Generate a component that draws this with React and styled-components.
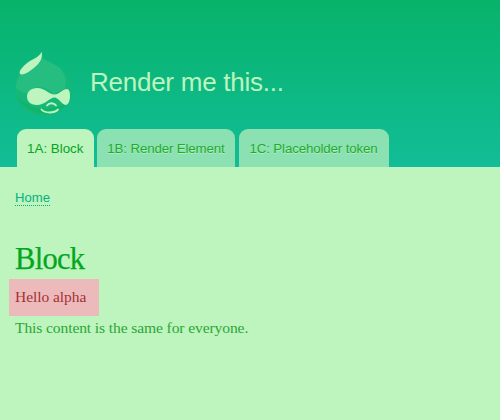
import React from "react";
import styled, { createGlobalStyle } from "styled-components";

const GlobalStyle = createGlobalStyle`
  * { box-sizing: border-box; }
  body { margin: 0; background: #bef4be; }
`;

const Page = styled.div`
  height: 420px;
  overflow: hidden;
  background: #bef4be;
  font-family: Georgia, "Liberation Serif", serif;
`;

const Header = styled.header`
  display: flex;
  flex-direction: column;
  justify-content: space-between;
  height: 167px;
  padding: 50px 0 0 13px;
  background: linear-gradient(#07b36a, #12bd97);
  font-family: "Liberation Sans", Arial, sans-serif;
`;

const Branding = styled.div`
  display: flex;
  align-items: flex-start;
`;

const Logo = styled.svg`
  width: 60px;
  height: 68px;
  flex: none;
`;

const SiteName = styled.div`
  margin: 16px 0 0 17px;
  color: #bef4be;
  font-size: 26px;
  line-height: 32px;
  letter-spacing: -0.25px;
  white-space: nowrap;
`;

const Tabs = styled.nav`
  display: flex;
  gap: 3.5px;
  padding-left: 4px;
`;

const Tab = styled.a`
  width: ${(p) => p.$width}px;
  height: 38px;
  border-radius: 9px 9px 0 0;
  background: ${(p) => (p.$active ? "#bef4be" : "#8be1b2")};
  color: ${(p) => (p.$active ? "#05a61f" : "#23ab31")};
  font-size: 13.33px;
  letter-spacing: ${(p) => (p.$active ? "0" : "-0.15px")};
  line-height: 39px;
  text-align: center;
  white-space: nowrap;
  text-shadow: 0 1px 0 ${(p) => (p.$active ? "transparent" : "#b0edc0")};
`;

const Main = styled.main`
  display: flex;
  flex-direction: column;
  align-items: flex-start;
  padding: 22px 9px 0;
`;

const Breadcrumb = styled.a`
  height: 17px;
  margin-left: 6px;
  border-bottom: 1px dotted #05ae7c;
  color: #05b27f;
  font: 13.1px/18px "Liberation Sans", Arial, sans-serif;
`;

const Title = styled.h1`
  margin: 36px 0 0 6px;
  height: 37px;
  color: #05a61f;
  font-weight: 400;
  font-size: 30.5px;
  line-height: 35px;
  letter-spacing: -0.7px;
  -webkit-text-stroke: 0.25px currentColor;
`;

const Greeting = styled.div`
  width: 90px;
  height: 37px;
  padding-left: 6px;
  background: #edbabc;
  color: #a13334;
  font-size: 15.5px;
  line-height: 36px;
  letter-spacing: -0.05px;
  white-space: nowrap;
`;

const Paragraph = styled.p`
  margin: 1px 0 0 6px;
  color: #2ca737;
  font-size: 15.6px;
  line-height: 22px;
  letter-spacing: -0.12px;
  white-space: nowrap;
`;

function DropletLogo() {
  return (
    <Logo viewBox="0 0 60 68">
      <path d="M28.7 1.7C29 6 31 8 34 10C39 13 44 16 49 20C56 26 59 32 59 39C59 55 46 66 30.5 66C14 66 2 55 2 39C2 30 5 22 12 17C20 11 28 10 28.7 1.7Z" fill="#15b878" />
      <path d="M29 8C33 11 41 13 47 18C53 25 54 34 51 40C45 40 42 46 39 43C31 35 20 36 15 43C10 43 6 41 3 38C3 32 5 27 8 24C14 25 24 18 29 8Z" fill="#25bd80" />
      <path d="M4 47C13 66 44 70 56 51C42 61 20 62 4 47Z" fill="#10b46b" />
      <path d="M28.7 1.7C27 6 22 8 17 11C11 15 5 21 7 24C10 26 18 21 22 17C27 13 30 8 28.7 1.7Z" fill="#bef4be" />
      <path d="M24 38C32 38 36 44.5 41.5 44.5C46 44.5 50 39 54 39C58 39 58 52 54 54.5C50 57 46 47.5 41.5 47.5C37 47.5 32 55 24 55C17 55 14 51 14 46.5C14 42 18 38 24 38Z" fill="#bef4be" />
      <path d="M34 55.5C36 52.5 41 52.5 43 55.5M28.5 59.5C32 63.5 41 63.5 45 59.5" fill="none" stroke="#bef4be" strokeWidth="1.8" strokeLinecap="round" />
    </Logo>
  );
}

export default function App() {
  return (
    <Page>
      <GlobalStyle />
      <Header>
        <Branding>
          <DropletLogo />
          <SiteName>Render me this...</SiteName>
        </Branding>
        <Tabs>
          <Tab $width={76.5} $active>1A: Block</Tab>
          <Tab $width={138}>1B: Render Element</Tab>
          <Tab $width={150}>1C: Placeholder token</Tab>
        </Tabs>
      </Header>
      <Main>
        <Breadcrumb>Home</Breadcrumb>
        <Title>Block</Title>
        <Greeting>Hello alpha</Greeting>
        <Paragraph>This content is the same for everyone.</Paragraph>
      </Main>
    </Page>
  );
}
